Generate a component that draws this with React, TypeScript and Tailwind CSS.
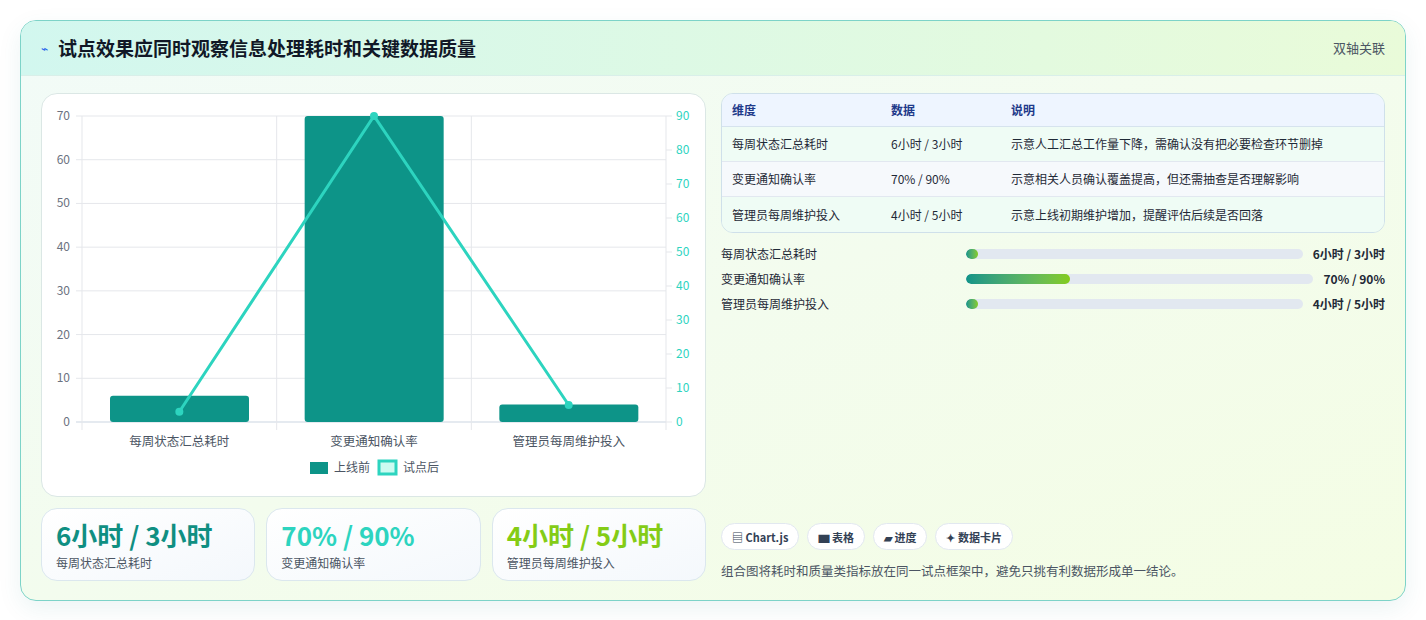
const F = { fontFamily: '"Noto Sans CJK SC", "Noto Sans", sans-serif' };

const rows = [
  { k: "每周状态汇总耗时", v: "6小时 / 3小时", d: "示意人工汇总工作量下降，需确认没有把必要检查环节删掉" },
  { k: "变更通知确认率", v: "70% / 90%", d: "示意相关人员确认覆盖提高，但还需抽查是否理解影响" },
  { k: "管理员每周维护投入", v: "4小时 / 5小时", d: "示意上线初期维护增加，提醒评估后续是否回落" },
];

const bars = [
  { k: "每周状态汇总耗时", v: "6小时 / 3小时", w: "w-[12px]" },
  { k: "变更通知确认率", v: "70% / 90%", w: "w-[30%]" },
  { k: "管理员每周维护投入", v: "4小时 / 5小时", w: "w-[12px]" },
];

function Chart() {
  const x0 = 40, x1 = 624, yTop = 22, yBot = 328;
  const ly = (v: number) => yBot - (v / 70) * (yBot - yTop);
  const ry = (v: number) => yBot - (v / 90) * (yBot - yTop);
  const cw = (x1 - x0) / 3;
  const before = [6, 70, 4];
  const after = [3, 90, 5];
  const cats = ["每周状态汇总耗时", "变更通知确认率", "管理员每周维护投入"];
  const pts = after.map((v, i) => [x0 + cw * (i + 0.5), ry(v)]);
  return (
    <svg width="665" height="403" className="block" style={F}>
      {[0, 10, 20, 30, 40, 50, 60, 70].map((v) => (
        <g key={v}>
          <line x1={x0 - 6} x2={x1} y1={ly(v)} y2={ly(v)} stroke={v === 0 ? "#cbd5e1" : "#e5e7eb"} />
          <text x={x0 - 12} y={ly(v) + 4} fontSize="12" fill="#6b7280" textAnchor="end">{v}</text>
        </g>
      ))}
      {[0, 10, 20, 30, 40, 50, 60, 70, 80, 90].map((v) => (
        <g key={v}>
          <line x1={x1} x2={x1 + 6} y1={ry(v)} y2={ry(v)} stroke="#e5e7eb" />
          <text x={x1 + 10} y={ry(v) + 4} fontSize="12" fill="#2dd4bf">{v}</text>
        </g>
      ))}
      {[0, 1, 2, 3].map((i) => (
        <line key={i} x1={x0 + cw * i} x2={x0 + cw * i} y1={yTop} y2={yBot + 8} stroke="#e5e7eb" />
      ))}
      {before.map((v, i) => (
        <g key={i}>
          <rect x={x0 + cw * i + 28} y={ly(v)} width={139} height={yBot - ly(v)} rx="3" fill="#0d9488" />
          <text x={x0 + cw * (i + 0.5)} y={yBot + 24} fontSize="12.5" fill="#4b5563" textAnchor="middle">{cats[i]}</text>
        </g>
      ))}
      <polyline points={pts.map((p) => p.join(",")).join(" ")} fill="none" stroke="#2dd4bf" strokeWidth="3" />
      {pts.map((p, i) => <circle key={i} cx={p[0]} cy={p[1]} r="4" fill="#2dd4bf" />)}
      <rect x="268" y="368" width="18" height="12" fill="#0d9488" />
      <text x="292" y="378" fontSize="12" fill="#4b5563">上线前</text>
      <rect x="337" y="367" width="17" height="13" fill="#ccfbf1" stroke="#2dd4bf" strokeWidth="3" />
      <text x="361" y="378" fontSize="12" fill="#4b5563">试点后</text>
    </svg>
  );
}

export default function App() {
  return (
    <div className="min-h-[620px] bg-white p-5" style={F}>
      <div className="rounded-2xl border border-[#7dd3c8] overflow-hidden shadow-[0_8px_24px_rgba(15,118,110,0.08)] bg-gradient-to-br from-[#f2fbf8] to-[#f4fde4]">
        <div className="h-[55px] flex items-center justify-between px-5 border-b border-[#d9efe9] bg-gradient-to-r from-[#d2f7ef] to-[#e9fbd9]">
          <div className="flex items-center gap-2.5">
            <span className="text-[#2563eb] text-xs">⌁</span>
            <span className="text-[19px] font-bold text-[#111827]">试点效果应同时观察信息处理耗时和关键数据质量</span>
          </div>
          <span className="text-[13px] text-[#4b5563]">双轴关联</span>
        </div>
        <div className="flex gap-[15px] px-5 pt-[17px] pb-[19px]">
          <div className="w-[665px] flex flex-col gap-[11px]">
            <div className="h-[404px] rounded-2xl border border-[#dbe7e5] bg-white overflow-hidden">
              <Chart />
            </div>
            <div className="grid grid-cols-3 gap-[11px]">
              {[
                ["6小时 / 3小时", "每周状态汇总耗时", "text-[#0f8f82]"],
                ["70% / 90%", "变更通知确认率", "text-[#2dd4bf]"],
                ["4小时 / 5小时", "管理员每周维护投入", "text-[#84cc16]"],
              ].map(([v, k, c]) => (
                <div key={k} className="h-[73px] rounded-2xl border border-[#dbe7ee] bg-gradient-to-br from-white to-[#f4f8fc] px-[14px] pt-[9px]">
                  <div className={`text-[26px] font-bold leading-[34px] ${c}`}>{v}</div>
                  <div className="text-[12px] text-[#4b5563] mt-[2px]">{k}</div>
                </div>
              ))}
            </div>
          </div>
          <div className="flex-1 flex flex-col">
            <div className="rounded-xl border border-[#cfe0ea] overflow-hidden text-[12px] text-[#1f2937]">
              <div className="grid grid-cols-[159px_120px_1fr] h-[33px] items-center px-[10px] bg-[#eef5ff] text-[#1e3a8a] font-semibold border-b border-[#d6e3ee]">
                <span>维度</span><span>数据</span><span>说明</span>
              </div>
              {rows.map((r, i) => (
                <div key={r.k} className={`grid grid-cols-[159px_120px_1fr] h-[35px] items-center px-[10px] ${i % 2 ? "bg-[#f6f9fc]" : "bg-[#effcf5]"} ${i < 2 ? "border-b border-[#e2e8f0]" : ""}`}>
                  <span>{r.k}</span><span>{r.v}</span><span>{r.d}</span>
                </div>
              ))}
            </div>
            <div className="mt-[12px] flex flex-col gap-[7px]">
              {bars.map((b) => (
                <div key={b.k} className="flex items-center h-[18px] text-[12px] text-[#1f2937]">
                  <span className="w-[245px] shrink-0">{b.k}</span>
                  <div className="flex-1 h-[10px] rounded-full bg-[#e2e8f0] overflow-hidden">
                    <div className={`h-full rounded-full bg-gradient-to-r from-[#0f9488] to-[#84cc16] ${b.w}`} />
                  </div>
                  <span className="ml-[10px] font-bold">{b.v}</span>
                </div>
              ))}
            </div>
            <div className="mt-auto flex gap-2 text-[11px] font-semibold text-[#334155]">
              {["▤ Chart.js", "▆ 表格", "▰ 进度", "✦ 数据卡片"].map((t) => (
                <span key={t} className="h-[27px] px-[10px] flex items-center rounded-full border border-[#e2e8f0] bg-white">{t}</span>
              ))}
            </div>
            <p className="mt-[12px] text-[12.5px] text-[#4b5563]">组合图将耗时和质量类指标放在同一试点框架中，避免只挑有利数据形成单一结论。</p>
          </div>
        </div>
      </div>
    </div>
  );
}
